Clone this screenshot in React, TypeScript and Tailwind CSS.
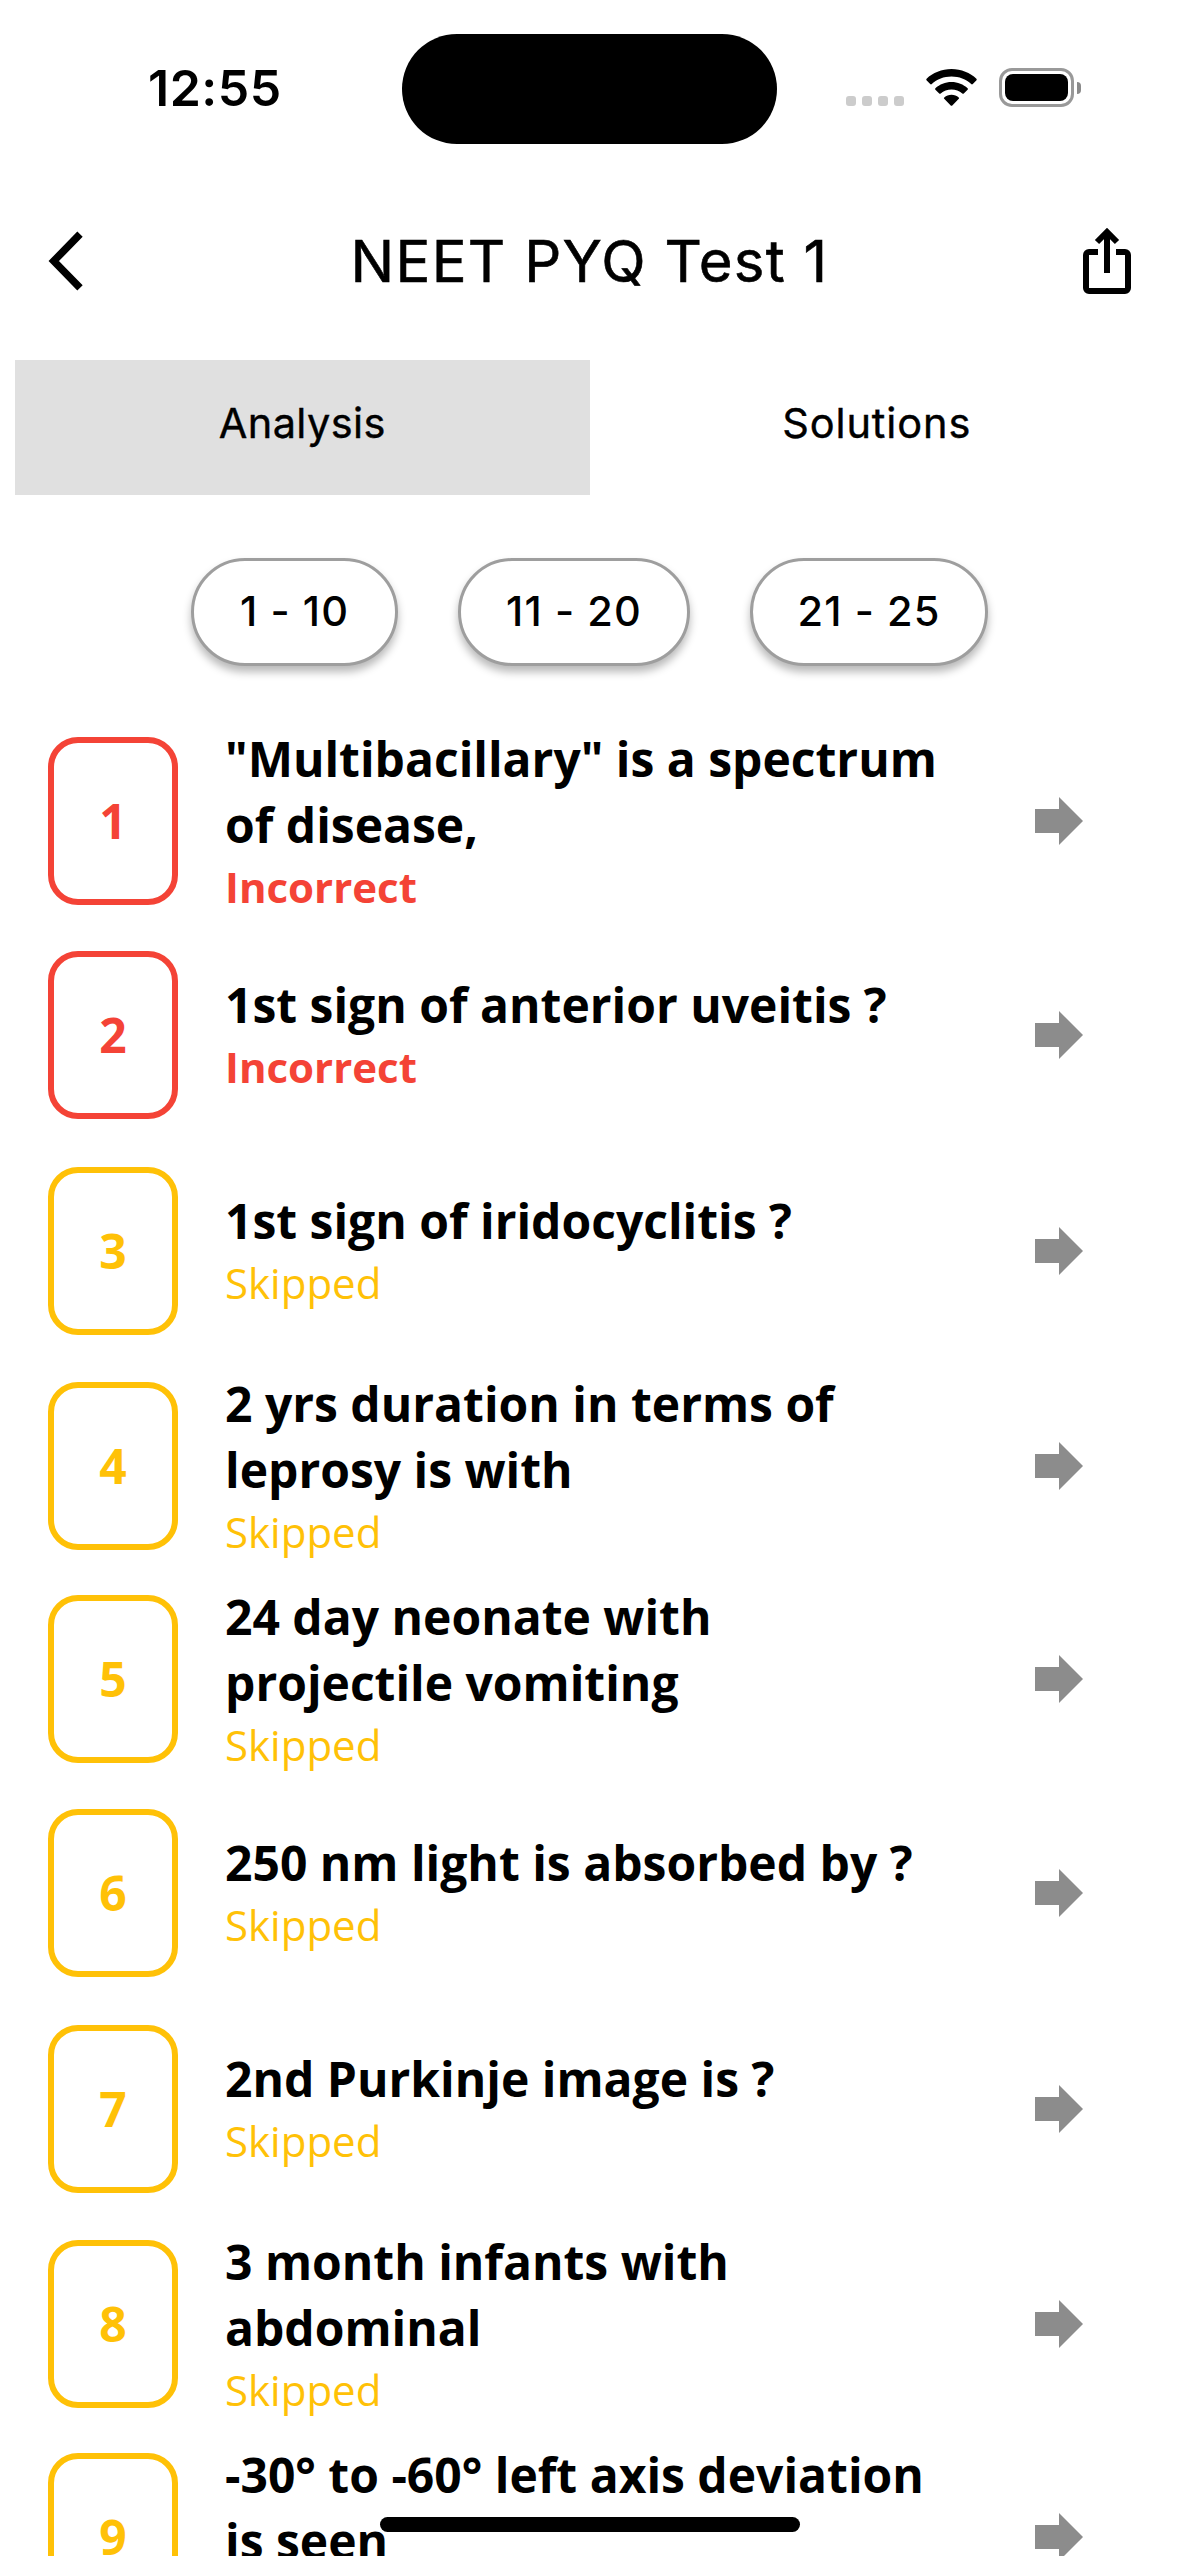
type Status = "Incorrect" | "Skipped";

type Question = { id: number; title: string; status: Status };

const questions: Question[] = [
  { id: 1, title: '"Multibacillary" is a spectrum of disease,', status: "Incorrect" },
  { id: 2, title: "1st sign of anterior uveitis ?", status: "Incorrect" },
  { id: 3, title: "1st sign of iridocyclitis ?", status: "Skipped" },
  { id: 4, title: "2 yrs duration in terms of leprosy is with", status: "Skipped" },
  { id: 5, title: "24 day neonate with projectile vomiting", status: "Skipped" },
  { id: 6, title: "250 nm light is absorbed by ?", status: "Skipped" },
  { id: 7, title: "2nd Purkinje image is ?", status: "Skipped" },
  { id: 8, title: "3 month infants with abdominal", status: "Skipped" },
  { id: 9, title: "-30° to -60° left axis deviation is seen", status: "Skipped" },
];

const singleLine = new Set([2, 3, 6, 7]);

function StatusBar() {
  return (
    <div className="flex h-[177px] shrink-0 items-start">
      <div className="w-[402px] pt-[58px] pl-[148px] text-[50px] leading-[60px] font-semibold tracking-[0.5px]">
        12:55
      </div>
      <div className="mt-[34px] h-[110px] w-[375px] rounded-full bg-black" />
      <div className="flex items-start pt-[68px] pl-[69px]">
        <div className="mt-[28px] flex gap-[6px]">
          <span className="size-[10px] rounded-[3px] bg-[#cccccc]" />
          <span className="size-[10px] rounded-[3px] bg-[#cccccc]" />
          <span className="size-[10px] rounded-[3px] bg-[#cccccc]" />
          <span className="size-[10px] rounded-[3px] bg-[#cccccc]" />
        </div>
        <svg className="mt-px ml-[22px] h-[37px] w-[51px]" viewBox="0 0 51 37">
          <path d="M25.5 0C35.3 0 44.2 3.9 50.4 9.7c.5.5.5 1 .1 1.500l-3.700 3.800c-.5.5-1.100.5-1.600 0C40 10.300 33.100 7.600 25.500 7.600S11 10.300 5.800 15c-.5.5-1.100.5-1.600 0L.5 11.200c-.4-.5-.4-1 .1-1.500C6.800 3.900 15.700 0 25.500 0Z" />
          <path d="M25.500 13c6.200 0 11.900 2.400 16.100 6.200.5.5.5 1 0 1.500l-3.800 3.800c-.4.4-1 .4-1.500 0-2.900-2.500-6.700-4-10.800-4s-7.900 1.500-10.800 4c-.5.4-1.100.4-1.500 0l-3.800-3.800c-.5-.5-.5-1 0-1.500C13.600 15.400 19.300 13 25.500 13Z" />
          <path d="M25.500 25.800c2.800 0 5.300 1 7.200 2.600.5.4.5 1 .1 1.400l-6.500 6.600c-.5.5-1.100.5-1.600 0l-6.500-6.600c-.4-.4-.4-1 .1-1.400 1.900-1.600 4.400-2.600 7.200-2.600Z" />
        </svg>
        <div className="ml-[22px] flex items-center">
          <div className="h-[39px] w-[75px] rounded-[13px] border-3 border-[#999999] p-[3px]">
            <div className="h-full w-full rounded-[8px] bg-black" />
          </div>
          <div className="ml-[3px] h-[12px] w-[4px] rounded-r-full bg-[#8a8a8a]" />
        </div>
      </div>
    </div>
  );
}

function Header() {
  return (
    <div className="flex h-[168px] shrink-0 items-center justify-between px-[48px]">
      <svg className="h-[60px] w-[48px]" viewBox="0 0 48 60" fill="none">
        <path d="M32 3.200 5.800 30 32 56.800" stroke="#000" strokeWidth="7.500" />
      </svg>
      <h1 className="text-[58px] leading-[72px] font-normal tracking-[1.300px] [-webkit-text-stroke:0.6px_#000]">
        NEET PYQ Test 1
      </h1>
      <svg className="h-[66px] w-[48px]" viewBox="0 0 48 66" fill="none" stroke="#000" strokeWidth="6">
        <path d="M15 24H6a3 3 0 0 0-3 3v33a3 3 0 0 0 3 3h36a3 3 0 0 0 3-3V27a3 3 0 0 0-3-3h-9" />
        <path d="M24 45V5" />
        <path d="m14 14 10-10 10 10" />
      </svg>
    </div>
  );
}

function RangePill({ label, width }: { label: string; width: string }) {
  return (
    <button
      className={`h-[108px] rounded-full border-3 border-[#9e9e9e] bg-white pb-[2px] text-[41.500px] leading-[50px] font-medium tracking-[1.100px] whitespace-nowrap shadow-[0_6px_9px_rgba(0,0,0,0.28)] ${width}`}
    >
      {label}
    </button>
  );
}

function QuestionRow({ question }: { question: Question }) {
  const wrong = question.status === "Incorrect";
  const single = singleLine.has(question.id);
  return (
    <li className={`flex shrink-0 items-center pr-[96px] pl-[48px] ${single ? "h-[216px]" : "h-[213px]"}`}>
      <div
        className={`flex h-[168px] w-[130px] shrink-0 items-center justify-center rounded-[30px] border-6 text-[48px] leading-[66px] font-bold ${wrong ? "border-[#f44336] text-[#f44336]" : "border-[#ffc107] text-[#ffc107]"}`}
      >
        {question.id}
      </div>
      <div className={`ml-[47px] w-[720px] ${single ? "pb-[3px]" : ""}`}>
        <h2 className="text-[48px] leading-[66px] font-bold">{question.title}</h2>
        <p
          className={`text-[42px] leading-[57px] ${wrong ? "font-bold text-[#f44336]" : "font-normal text-[#ffc107]"}`}
        >
          {question.status}
        </p>
      </div>
      <svg className="ml-auto h-[48px] w-[48px]" viewBox="0 0 48 48" fill="#8c8c8c">
        <path d="M24 0v12H0v24h24v12l24-24Z" />
      </svg>
    </li>
  );
}

export default function App() {
  return (
    <main className="relative flex h-[2556px] w-[1179px] flex-col overflow-hidden bg-white font-['Inter',sans-serif] text-black">
      <StatusBar />
      <Header />
      <div className="mt-[15px] flex h-[135px] shrink-0 px-[15px] text-[41.500px] leading-[50px] font-normal [-webkit-text-stroke:0.4px_#000]">
        <button className="flex-1 bg-[#e0e0e0] pb-[10px] tracking-[0.4px]">Analysis</button>
        <button className="flex-1 pb-[10px] tracking-[0.9px]">Solutions</button>
      </div>
      <div className="mt-[63px] flex shrink-0 justify-center gap-[60px]">
        <RangePill label="1 - 10" width="w-[207px]" />
        <RangePill label="11 - 20" width="w-[232px]" />
        <RangePill label="21 - 25" width="w-[238px]" />
      </div>
      <ul className="mt-[48px] flex flex-col font-['Open_Sans',sans-serif]">
        {questions.map((question) => (
          <QuestionRow key={question.id} question={question} />
        ))}
      </ul>
      <div className="absolute bottom-[24px] left-1/2 h-[15px] w-[420px] -translate-x-1/2 rounded-full bg-black" />
    </main>
  );
}
